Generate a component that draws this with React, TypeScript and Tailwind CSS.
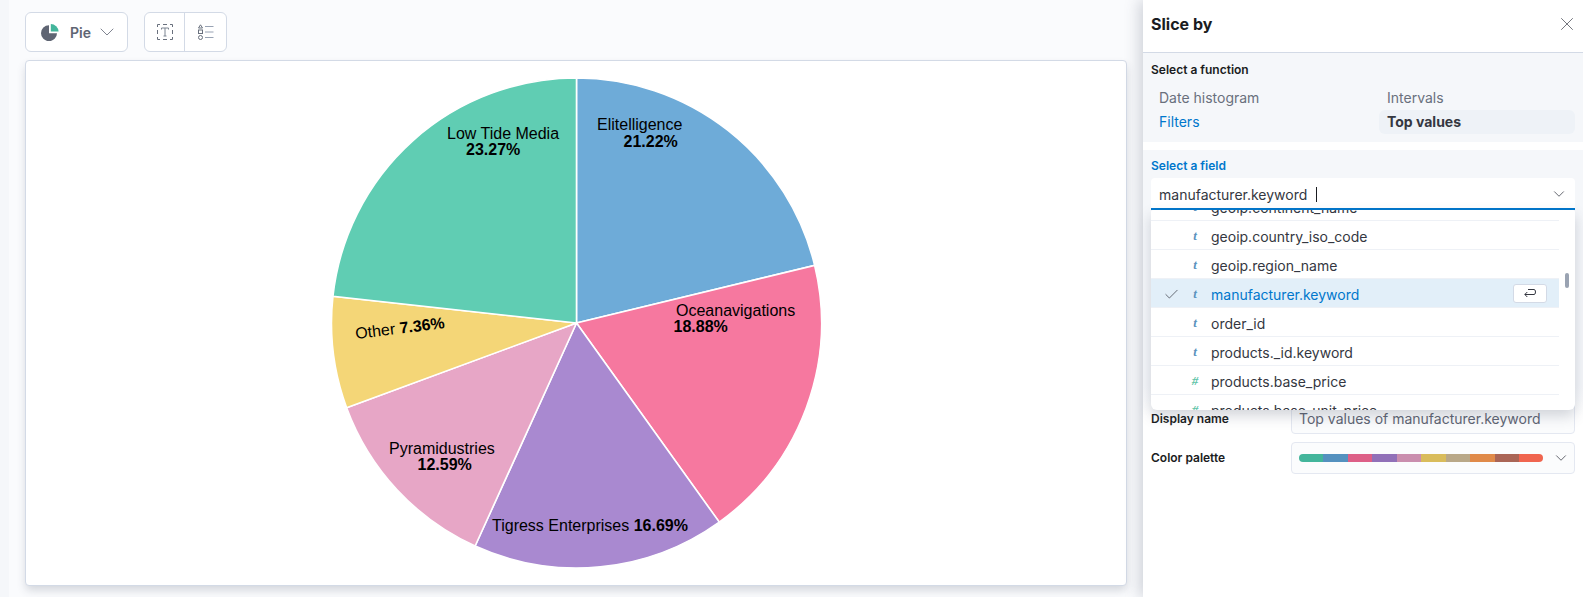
import { ChevronDown, Check, X } from "lucide-react";

// ─── Pie data ────────────────────────────────────────────────────────────────

const SLICES = [
  { pct: 21.22, fill: "#6eabd8" },
  { pct: 18.88, fill: "#f6789f" },
  { pct: 16.69, fill: "#a989d0" },
  { pct: 12.59, fill: "#e7a6c6" },
  { pct: 7.36, fill: "#f4d677" },
  { pct: 23.26, fill: "#60cdb3" },
];

const FIELDS = [
  { name: "geoip.country_iso_code", type: "t" },
  { name: "geoip.region_name", type: "t" },
  { name: "manufacturer.keyword", type: "t", selected: true },
  { name: "order_id", type: "t" },
  { name: "products._id.keyword", type: "t" },
  { name: "products.base_price", type: "#" },
  { name: "products.base_unit_price", type: "#" },
];

const PALETTE = [
  { color: "#43b59b", width: 24 },
  { color: "#5491bf", width: 25 },
  { color: "#dd5f87", width: 24 },
  { color: "#9170b8", width: 25 },
  { color: "#ca8eae", width: 24 },
  { color: "#d9bc5b", width: 25 },
  { color: "#b9a888", width: 24 },
  { color: "#e08a49", width: 25 },
  { color: "#aa6556", width: 24 },
  { color: "#f0654f", width: 24 },
];

// chart center and radius, relative to the svg (card starts at 25,60)
const CX = 550.5;
const CY = 262;
const R = 245;

function slicePath(startPct: number, pct: number) {
  const a0 = (startPct / 100) * Math.PI * 2;
  const a1 = ((startPct + pct) / 100) * Math.PI * 2;
  const x0 = CX + R * Math.sin(a0);
  const y0 = CY - R * Math.cos(a0);
  const x1 = CX + R * Math.sin(a1);
  const y1 = CY - R * Math.cos(a1);
  return `M${CX} ${CY}L${x0} ${y0}A${R} ${R} 0 ${pct > 50 ? 1 : 0} 1 ${x1} ${y1}Z`;
}

// ─── Icons ───────────────────────────────────────────────────────────────────

const PieIcon = () => (
  <svg width="18" height="18" viewBox="0 0 18 18" className="shrink-0">
    <path d="M8 2.2A8 8 0 1 0 16 10.2H8Z" fill="#5f6573" />
    <path d="M9.8 1a8 8 0 0 1 7.8 7.4H9.8Z" fill="#43b59b" />
  </svg>
);

const TextIcon = () => (
  <svg width="16" height="16" viewBox="0 0 16 16" fill="none" stroke="#69707d" strokeWidth="1">
    <path d="M.5 3V.5H3M6 .5h4M13 .5h2.500V3M.5 6v4M15.500 6v4M.5 13v2.500H3M6 15.500h4M13 15.500h2.500V13" />
    <path d="M4.500 5.500V4H11.500V5.500M8 4v8M6.500 12h3" stroke="#7d8592" />
  </svg>
);

const ListIcon = () => (
  <svg width="16" height="16" viewBox="0 0 16 16" fill="none" stroke="#69707d" strokeWidth="1">
    <path d="M2.500.8 4.500 4H.5Z" />
    <rect x=".5" y="6" width="4" height="3.500" />
    <circle cx="2.500" cy="13.500" r="2" />
    <path d="M7 2.500h8.500M7 8h8.500M7 13.500h8.500" stroke="#98a2b3" />
  </svg>
);

const ReturnIcon = () => (
  <svg width="12" height="9" viewBox="0 0 12 9" fill="none" stroke="#343741" strokeWidth="1">
    <path d="M4 .5h6a1.500 2.500 0 0 1 0 5H.8M3.300 3 .8 5.500 3.300 8" />
  </svg>
);

// ─── Panel pieces ────────────────────────────────────────────────────────────

function FieldRow({ name, type, selected }: { name: string; type: string; selected?: boolean }) {
  return (
    <div
      className={`flex h-[29px] shrink-0 items-center border-b border-[#eef1f6] pt-[2px] ${
        selected ? "bg-[#e2eff9] text-[#0077cc]" : "text-[#343741]"
      }`}
    >
      <span className="flex w-[36px] justify-center pl-[4px]">
        {selected && <Check size={17} strokeWidth={1} className="text-[#343741]" />}
      </span>
      <span
        className={`w-[16px] text-center font-['Liberation_Serif',serif] text-[13px] font-bold italic ${
          type === "#" ? "text-[#5fc4a8]" : "text-[#5a92bd]"
        }`}
      >
        {type}
      </span>
      <span className="grow pl-[8px]">{name}</span>
      {selected && (
        <span className="mb-[2px] mr-[12px] flex h-[19px] w-[34px] items-center justify-center rounded-[3px] border border-[#d3dae6] bg-white">
          <ReturnIcon />
        </span>
      )}
    </div>
  );
}

function ChartCard() {
  let start = 0;
  return (
    <div className="h-[526px] w-[1102px] rounded-[4px] border border-[#d3dae6] bg-white shadow-[0_5px_10px_-1px_rgba(50,60,80,0.2)]">
      <svg width="1100" height="524" className="font-['Liberation_Sans',sans-serif] text-[16px]">
        {SLICES.map((s) => {
          const d = slicePath(start, s.pct);
          start += s.pct;
          return <path key={s.fill} d={d} fill={s.fill} stroke="#fff" strokeWidth="1.6" />;
        })}
        <text x="421" y="78">Low Tide Media</text>
        <text x="440" y="94" fontWeight="700">23.27%</text>
        <text x="571" y="69">Elitelligence</text>
        <text x="597.500" y="85.500" fontWeight="700">21.22%</text>
        <text x="650" y="255">Oceanavigations</text>
        <text x="647.500" y="271" fontWeight="700">18.88%</text>
        <text x="363" y="393">Pyramidustries</text>
        <text x="391.500" y="409" fontWeight="700">12.59%</text>
        <text x="466" y="470">
          Tigress Enterprises <tspan fontWeight="700">16.69%</tspan>
        </text>
        <text x="330" y="278" transform="rotate(-7 330 278)">
          Other <tspan fontWeight="700">7.36%</tspan>
        </text>
      </svg>
    </div>
  );
}

// ─── Page ────────────────────────────────────────────────────────────────────

export default function App() {
  return (
    <div className="flex h-[597px] w-[1583px] overflow-hidden bg-[#fafbfd] font-['Inter',sans-serif] text-[14px]">
      <div className="w-[9px] shrink-0 bg-[#f5f7fa]" />

      {/* ── Workspace ── */}
      <div className="w-[1134px] shrink-0 pl-[16px] pt-[12px]">
        <div className="flex gap-[16px]">
          <div className="flex h-[40px] w-[103px] items-center rounded-[6px] border border-[#d3dae6] bg-white pl-[15px]">
            <PieIcon />
            <span className="ml-[11px] font-semibold text-[#5f6573]">Pie</span>
            <ChevronDown size={24} strokeWidth={0.8} className="ml-[4px] text-[#5f6573]" />
          </div>
          <div className="flex h-[40px] w-[83px] rounded-[6px] border border-[#d3dae6] bg-white">
            <span className="flex w-[40px] items-center justify-center border-r border-[#d3dae6]">
              <TextIcon />
            </span>
            <span className="flex grow items-center justify-center">
              <ListIcon />
            </span>
          </div>
        </div>
        <div className="mt-[8px]">
          <ChartCard />
        </div>
      </div>

      {/* ── Side panel ── */}
      <div className="relative flex w-[440px] shrink-0 flex-col bg-white shadow-[-4px_0_14px_rgba(60,70,90,0.22)]">
        <div className="flex h-[53px] shrink-0 items-center justify-between border-b border-[#d3dae6] pl-[8px] pr-[5px]">
          <span className="pb-[5px] text-[16px] font-bold text-[#1a1c21]">Slice by</span>
          <X size={22} strokeWidth={0.75} className="mb-[5px] text-[#343741]" />
        </div>

        <div className="h-[89px] shrink-0 bg-[#f5f7fa] px-[8px] pt-[8px]">
          <div className="text-[12px] font-semibold leading-[18px] text-[#1a1c21]">Select a function</div>
          <div className="mt-[7px] grid grid-cols-[228px_196px] leading-[24px]">
            <span className="pl-[8px] text-[#69707d]">Date histogram</span>
            <span className="pl-[8px] text-[#69707d]">Intervals</span>
            <span className="pl-[8px] text-[#0077cc]">Filters</span>
            <span className="rounded-[6px] bg-[#eef2f7] pl-[8px] font-bold text-[#343741]">Top values</span>
          </div>
        </div>

        <div className="mt-[8px] h-[236px] shrink-0 bg-[#f5f7fa] px-[8px] pt-[7px]">
          <div className="text-[12px] font-semibold leading-[18px] text-[#0077cc]">Select a field</div>
          <div className="mt-[3px] flex h-[32px] items-center justify-between rounded-t-[4px] border-b-2 border-[#0077cc] bg-white pl-[8px] pr-[7px] pt-[2px] text-[#343741]">
            <span className="flex items-center">
              manufacturer.keyword
              <span className="ml-[9px] h-[15px] w-px bg-[#1a1c21]" />
            </span>
            <ChevronDown size={18} strokeWidth={1} />
          </div>
        </div>

        <div className="flex flex-col gap-[8px] bg-gradient-to-b from-[#f5f7fa] to-white to-[30px] px-[8px] pt-[12px]">
          <div className="flex h-[36px] items-center pt-[4px]">
            <span className="w-[140px] pt-[1px] text-[12px] font-semibold text-[#1a1c21]">Display name</span>
            <span className="flex h-[32px] grow items-center rounded-[4px] border border-[#e4e8f1] bg-[#fbfcfd] pl-[7px] pt-[1px] text-[#5f6573]">
              Top values of manufacturer.keyword
            </span>
          </div>
          <div className="flex h-[32px] items-center">
            <span className="w-[140px] text-[12px] font-semibold text-[#1a1c21]">Color palette</span>
            <span className="flex h-[32px] grow items-center rounded-[4px] border border-[#e4e8f1] bg-[#fbfcfd] pl-[7px] pr-[4px]">
              <span className="flex h-[8px] grow overflow-hidden rounded-[4px]">
                {PALETTE.map((p) => (
                  <span key={p.color} className="h-full grow" style={{ flexBasis: p.width, background: p.color }} />
                ))}
              </span>
              <ChevronDown size={18} strokeWidth={1} className="ml-[9px] text-[#343741]" />
            </span>
          </div>
        </div>

        {/* ── Field dropdown (overlay) ── */}
        <div className="absolute left-[8px] top-[210px] h-[200px] w-[424px] overflow-hidden rounded-b-[6px] rounded-t-[2px] bg-white shadow-[0_6px_14px_rgba(60,70,90,0.22)]">
          <div className="mr-[16px] flex flex-col">
            <div className="h-[11px] shrink-0 overflow-hidden border-b border-[#eef1f6]">
              <div className="-mt-[16px] flex h-[26px] items-center text-[#343741]">
                <span className="w-[36px]" />
                <span className="w-[16px] text-center font-['Liberation_Serif',serif] text-[13px] font-bold italic text-[#5a92bd]">t</span>
                <span className="pl-[8px]">geoip.continent_name</span>
              </div>
            </div>
            {FIELDS.map((f) => (
              <FieldRow key={f.name} {...f} />
            ))}
          </div>
          <div className="absolute right-[6px] top-[63px] h-[15px] w-[4px] rounded-[2px] bg-[#9aa3b2]" />
        </div>
      </div>
    </div>
  );
}
